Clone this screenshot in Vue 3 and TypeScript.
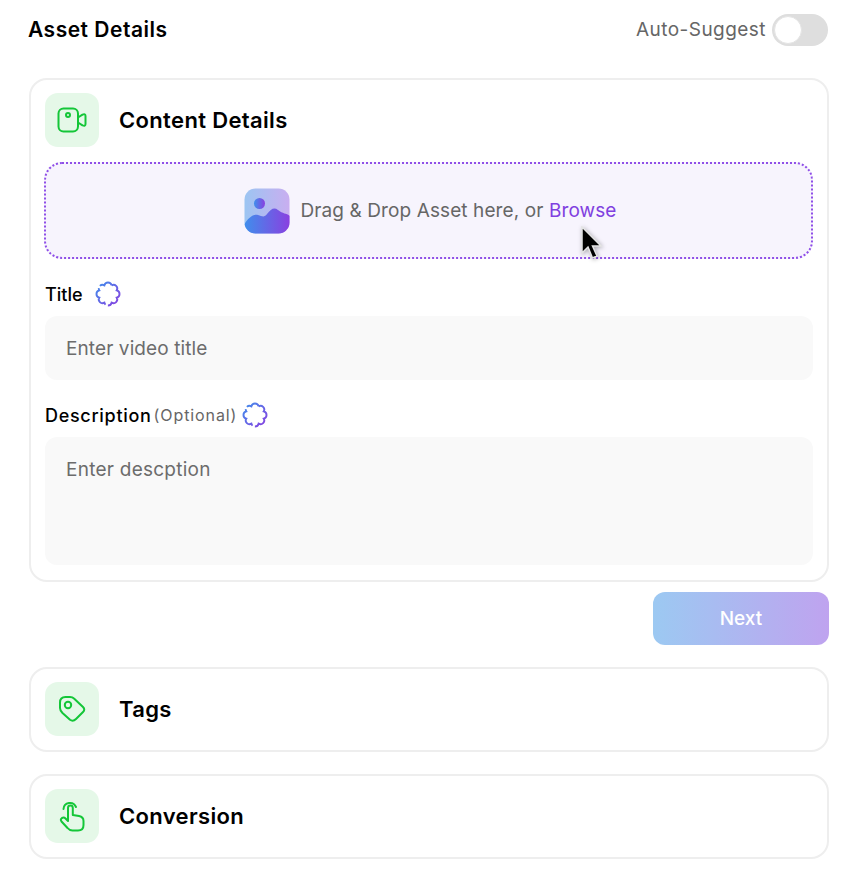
<template>
  <div class="page">
    <header class="top-row">
      <h1 class="page-title">Asset Details</h1>
      <div class="auto-suggest">
        <span>Auto-Suggest</span>
        <span class="toggle"><span class="knob"></span></span>
      </div>
    </header>

    <section class="card main-card">
      <div class="card-head">
        <span class="icon-box">
          <svg width="30" height="26" viewBox="0 0 30 26" fill="none" stroke="#14c638" stroke-width="2" stroke-linejoin="round">
            <rect x="1.5" y="1.5" width="19.5" height="23" rx="5" />
            <circle cx="11" cy="8" r="2" />
            <path d="M21 10.5 L25.5 7.6 Q28.5 6.5 28.5 9 V17 Q28.5 19.5 25.5 18.4 L21 15.5" />
          </svg>
        </span>
        <h2 class="card-title">Content Details</h2>
      </div>

      <div class="dropzone">
        <svg class="drop-icon" width="46" height="46" viewBox="0 0 46 46">
          <defs>
            <linearGradient id="dropBg" x1="0" y1="0" x2="1" y2="0">
              <stop offset="0" stop-color="#9cc5f2" />
              <stop offset="1" stop-color="#c9aef0" />
            </linearGradient>
            <linearGradient id="dropFg" x1="0" y1="0" x2="1" y2="0">
              <stop offset="0" stop-color="#3f8fec" />
              <stop offset="1" stop-color="#8a3fe0" />
            </linearGradient>
            <clipPath id="dropClip">
              <rect x="0.5" y="0.5" width="45" height="45" rx="11" />
            </clipPath>
          </defs>
          <rect x="0.5" y="0.5" width="45" height="45" rx="11" fill="url(#dropBg)" />
          <g clip-path="url(#dropClip)" fill="url(#dropFg)">
            <circle cx="15.5" cy="15.5" r="5.5" />
            <path d="M0 37 C4 30 9 26 14 27 C18 28 20 30 23 26 C27 21 30 19 34 22 C39 26 42 25 46 28 V46 H0 Z" />
          </g>
        </svg>
        <span class="drop-text">Drag &amp; Drop Asset here, or <span class="browse">Browse</span></span>
      </div>

      <div class="field-label title-label">
        <span class="label-text">Title</span>
        <svg class="ai-icon" width="26" height="26" viewBox="0 0 26 26" fill="none" stroke="url(#aiStroke)" stroke-width="1.9">
          <defs>
            <linearGradient id="aiStroke" x1="0" y1="0" x2="1" y2="1">
              <stop offset="0" stop-color="#3f8fec" />
              <stop offset="1" stop-color="#8a3fe0" />
            </linearGradient>
          </defs>
          <path :d="scallopPath" stroke-dasharray="34 2.5 24 2.5" />
        </svg>
      </div>
      <input class="text-input" type="text" placeholder="Enter video title" />

      <div class="field-label desc-label">
        <span class="label-text">Description</span>
        <span class="optional">(Optional)</span>
        <svg class="ai-icon" width="26" height="26" viewBox="0 0 26 26" fill="none" stroke="url(#aiStroke2)" stroke-width="1.9">
          <defs>
            <linearGradient id="aiStroke2" x1="0" y1="0" x2="1" y2="1">
              <stop offset="0" stop-color="#3f8fec" />
              <stop offset="1" stop-color="#8a3fe0" />
            </linearGradient>
          </defs>
          <path :d="scallopPath" stroke-dasharray="34 2.5 24 2.5" />
        </svg>
      </div>
      <textarea class="text-area" placeholder="Enter descption"></textarea>
    </section>

    <div class="actions">
      <button class="next-btn" type="button">Next</button>
    </div>

    <section class="card collapsed">
      <div class="card-head">
        <span class="icon-box">
          <svg width="28" height="28" viewBox="0 0 28 28" fill="none" stroke="#14c638" stroke-width="2" stroke-linejoin="round">
            <path d="M2 7.5 Q2 2 7.5 2 H12 Q14.5 2 16 3.5 L25 12 Q27.5 14.5 25 17 L18 24 Q15 27 12 24.8 L4.5 18 Q2 15.5 2 13 Z" />
            <circle cx="10" cy="10" r="3.2" />
          </svg>
        </span>
        <h2 class="card-title">Tags</h2>
      </div>
    </section>

    <section class="card collapsed conversion">
      <div class="card-head">
        <span class="icon-box">
          <svg width="26" height="32" viewBox="0 0 26 32" fill="none" stroke="#14c638" stroke-width="2" stroke-linecap="round" stroke-linejoin="round">
            <path d="M4.5 9 A6.5 6.5 0 0 1 17 7" />
            <path d="M9 14 V8 A2.4 2.4 0 0 1 13.8 8 V15 L20 16 Q24.5 17 24.5 21 V25 Q24.5 30.5 19 30.5 H13.5 Q10.5 30.5 8.5 28 L2.5 21.5 Q1 19.5 3 18 Q5 17 6.5 18.5 L9 21 V14" />
          </svg>
        </span>
        <h2 class="card-title">Conversion</h2>
      </div>
    </section>

    <svg class="cursor" width="24" height="36" viewBox="0 0 24 36">
      <path d="M2 1 V27 L8 21 L12.5 32 L17 30 L12.5 20 H21 Z" fill="#000" stroke="#e4e4e4" stroke-width="1.5" />
    </svg>
  </div>
</template>

<script setup lang="ts">
import { computed } from 'vue';

// scalloped outline of the little AI badge
const scallopPath = computed(() => {
  const lobes = 8;
  const radius = 9.4;
  const center = 13;
  let d = '';
  for (let i = 0; i <= lobes; i++) {
    const angle = (i / lobes) * Math.PI * 2 - Math.PI / 2 + Math.PI / 8;
    const x = (center + radius * Math.cos(angle)).toFixed(2);
    const y = (center + radius * Math.sin(angle)).toFixed(2);
    d += i === 0 ? `M${x} ${y}` : ` A3.7 3.7 0 0 1 ${x} ${y}`;
  }
  return d;
});
</script>

<style>
html,
body {
  background: #ffffff;
}
</style>

<style scoped>
.page {
  position: relative;
  width: 800px;
  height: 890px;
  box-sizing: border-box;
  margin-left: 29px;
  padding-top: 14px;
  font-family: Inter, "Open Sans", sans-serif;
  color: #000;
}

.top-row {
  display: flex;
  align-items: center;
  justify-content: space-between;
  height: 32px;
  margin-bottom: 32px;
}

.page-title {
  margin: -1px 0 0 -1px;
  font-size: 21px;
  font-weight: 600;
  letter-spacing: 0.5px;
}

.auto-suggest {
  display: flex;
  align-items: center;
  gap: 6px;
  margin-right: 1px;
  margin-top: -2px;
  font-size: 19px;
  color: #666;
  letter-spacing: 0.45px;
}

.toggle {
  display: flex;
  align-items: center;
  width: 56px;
  height: 32px;
  margin-top: 2px;
  border-radius: 16px;
  background: #dedede;
}

.knob {
  width: 26px;
  height: 26px;
  margin-left: 2px;
  border-radius: 50%;
  background: #fff;
  border: 1px solid #e4e4e4;
}

.card {
  box-sizing: border-box;
  border: 2px solid #eeeeee;
  border-radius: 18px;
  padding: 13px 14px;
  background: #fff;
}

.main-card {
  height: 504px;
}

.card-head {
  display: flex;
  align-items: center;
  gap: 20px;
}

.icon-box {
  display: flex;
  align-items: center;
  justify-content: center;
  width: 54px;
  height: 54px;
  border-radius: 13px;
  background: #e5f8e8;
}

.card-title {
  margin: 0;
  font-size: 22px;
  font-weight: 600;
  letter-spacing: 0.35px;
}

.dropzone {
  display: flex;
  align-items: center;
  justify-content: center;
  gap: 10px;
  box-sizing: border-box;
  height: 97px;
  margin: 15px 0 0 -1px;
  border: 2px dotted #8f4fe8;
  border-radius: 18px;
  background: #f7f4fd;
  padding-left: 4px;
}

.drop-icon {
  flex: none;
}

.drop-text {
  font-size: 19px;
  color: #666;
  letter-spacing: 0.1px;
}

.browse {
  color: #8040e0;
}

.field-label {
  display: flex;
  align-items: center;
  height: 26px;
}

.title-label {
  margin-top: 22px;
  gap: 12px;
}

.title-label .label-text {
  letter-spacing: 0;
}

.desc-label {
  margin-top: 22px;
  gap: 2px;
}

.desc-label .ai-icon {
  margin-left: 3px;
}

.label-text {
  font-size: 18px;
  font-weight: 500;
  letter-spacing: 0.7px;
}

.optional {
  font-size: 16px;
  color: #666;
  letter-spacing: 0.9px;
}

.ai-icon {
  flex: none;
}

.text-input,
.text-area {
  display: block;
  box-sizing: border-box;
  width: 768px;
  border: 0;
  outline: 0;
  border-radius: 12px;
  background: #f9f9f9;
  padding: 0 21px;
  font-family: inherit;
  font-size: 19px;
  letter-spacing: 0.1px;
  color: #666;
}

.text-input::placeholder,
.text-area::placeholder {
  color: #6c6c6c;
  opacity: 1;
}

.text-input {
  height: 64px;
  margin-top: 9px;
}

.text-area {
  height: 128px;
  margin-top: 9px;
  padding-top: 21px;
  letter-spacing: 0.25px;
  resize: none;
}

.actions {
  display: flex;
  justify-content: flex-end;
  margin-top: 10px;
  margin-bottom: 22px;
}

.next-btn {
  width: 176px;
  height: 53px;
  border: 0;
  border-radius: 12px;
  background: linear-gradient(90deg, #9cc9f2, #bfa3ef);
  color: #fff;
  font-family: inherit;
  font-size: 19px;
  font-weight: 500;
}

.collapsed {
  height: 85px;
}

.conversion {
  margin-top: 22px;
}

.cursor {
  position: absolute;
  left: 551px;
  top: 226px;
  filter: drop-shadow(1px 1px 2px rgba(0, 0, 0, 0.3));
}
</style>
